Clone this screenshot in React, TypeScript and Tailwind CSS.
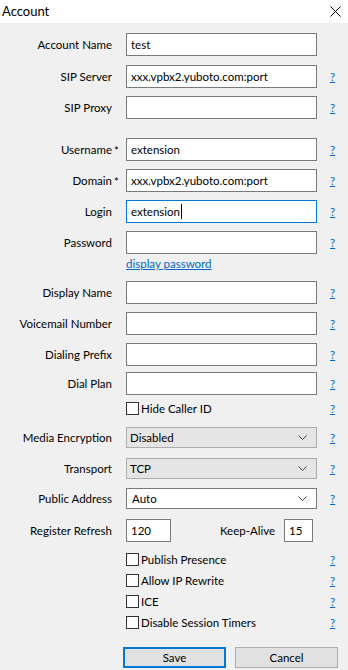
import React from "react";

const font = { fontFamily: "Lato, 'Liberation Sans', sans-serif" };

function Help() {
  return <a href="#" className="ml-[13px] text-[#0066cc] underline leading-none">?</a>;
}

function Field({ label, value, star, focused, mt }: { label: string; value?: string; star?: boolean; focused?: boolean; mt: string }) {
  return (
    <div className={`flex items-center h-[23px] ${mt}`}>
      <div className="w-[112px] text-right relative">
        {label}
        {star && <span className="absolute left-[calc(100%+2px)] top-[1px]">*</span>}
      </div>
      <div
        className={`ml-[14px] w-[191px] h-[23px] bg-white border flex items-center pl-[4px] ${focused ? "border-[#0078d7]" : "border-[#7a7a7a]"}`}
      >
        {value}
        {focused && <span className="w-px h-[15px] bg-black ml-px" />}
      </div>
      <Help />
    </div>
  );
}

function Select({ label, value, gray, mt }: { label: string; value: string; gray?: boolean; mt: string }) {
  return (
    <div className={`flex items-center h-[21px] ${mt}`}>
      <div className="w-[112px] text-right">{label}</div>
      <div
        className={`ml-[14px] w-[191px] h-[21px] border flex items-center justify-between ${gray ? "bg-[#e5e5e5] border-[#adadad] pl-[3px]" : "bg-white border-[#7a7a7a] pl-[5px]"} pr-[9px]`}
      >
        <span>{value}</span>
        <svg width="9" height="5" viewBox="0 0 9 5" fill="none" stroke="#444" strokeWidth="1">
          <path d="M0.5 0.5 L4.5 4.5 L8.5 0.5" />
        </svg>
      </div>
      <Help />
    </div>
  );
}

function Check({ label, mt }: { label: string; mt?: string }) {
  return (
    <div className={`flex items-center h-[21px] ${mt ?? ""}`}>
      <div className="w-[126px]" />
      <div className="w-[191px] flex items-center">
        <span className="w-[13px] h-[13px] border border-[#333] bg-white" />
        <span className="ml-[2px]">{label}</span>
      </div>
      <Help />
    </div>
  );
}

export default function App() {
  return (
    <div className="w-[348px] h-[670px] bg-[#f0f0f0] text-[11.5px] text-black overflow-hidden" style={font}>
      <div className="h-[23px] bg-white flex items-center justify-between pl-[2px] pr-[7px]">
        <span className="text-[13px]">Account</span>
        <svg width="11" height="11" viewBox="0 0 11 11" stroke="#000" strokeWidth="1">
          <path d="M0.5 0.5 L10.5 10.5 M10.5 0.5 L0.5 10.5" />
        </svg>
      </div>

      <div className="flex items-center h-[23px] mt-[10px]">
        <div className="w-[112px] text-right">Account Name</div>
        <div className="ml-[14px] w-[191px] h-[23px] bg-white border border-[#7a7a7a] flex items-center pl-[4px]">test</div>
      </div>
      <Field label="SIP Server" value="xxx.vpbx2.yuboto.com:port" mt="mt-[9px]" />
      <Field label="SIP Proxy" mt="mt-[8px]" />

      <Field label="Username" value="extension" star mt="mt-[19px]" />
      <Field label="Domain" value="xxx.vpbx2.yuboto.com:port" star mt="mt-[8px]" />
      <Field label="Login" value="extension" focused mt="mt-[8px]" />
      <Field label="Password" mt="mt-[8px]" />
      <div className="h-[16px] mt-[2px] pl-[126px] flex items-center">
        <a href="#" className="text-[#0066cc] underline">display password</a>
      </div>

      <Field label="Display Name" mt="mt-[9px]" />
      <Field label="Voicemail Number" mt="mt-[8px]" />
      <Field label="Dialing Prefix" mt="mt-[8px]" />
      <Field label="Dial Plan" mt="mt-[6px]" />
      <Check label="Hide Caller ID" mt="mt-[3px]" />

      <Select label="Media Encryption" value="Disabled" gray mt="mt-[8px]" />
      <Select label="Transport" value="TCP" gray mt="mt-[10px]" />
      <Select label="Public Address" value="Auto" mt="mt-[9px]" />

      <div className="flex items-center h-[23px] mt-[10px]">
        <div className="w-[112px] text-right">Register Refresh</div>
        <div className="ml-[14px] w-[45px] h-[23px] bg-white border border-[#7a7a7a] flex items-center pl-[4px]">120</div>
        <div className="w-[104px] text-right">Keep-Alive</div>
        <div className="ml-[9px] w-[29px] h-[23px] bg-white border border-[#7a7a7a] flex items-center pl-[4px]">15</div>
      </div>

      <Check label="Publish Presence" mt="mt-[7px]" />
      <Check label="Allow IP Rewrite" />
      <Check label="ICE" />
      <Check label="Disable Session Timers" />

      <div className="flex mt-[14px] pl-[123px] gap-[9px]">
        <button className="w-[103px] h-[21px] bg-[#e1e1e1] border-2 border-[#0078d7] flex items-center justify-center">Save</button>
        <button className="w-[103px] h-[21px] bg-[#e1e1e1] border border-[#adadad] flex items-center justify-center">Cancel</button>
      </div>
    </div>
  );
}
